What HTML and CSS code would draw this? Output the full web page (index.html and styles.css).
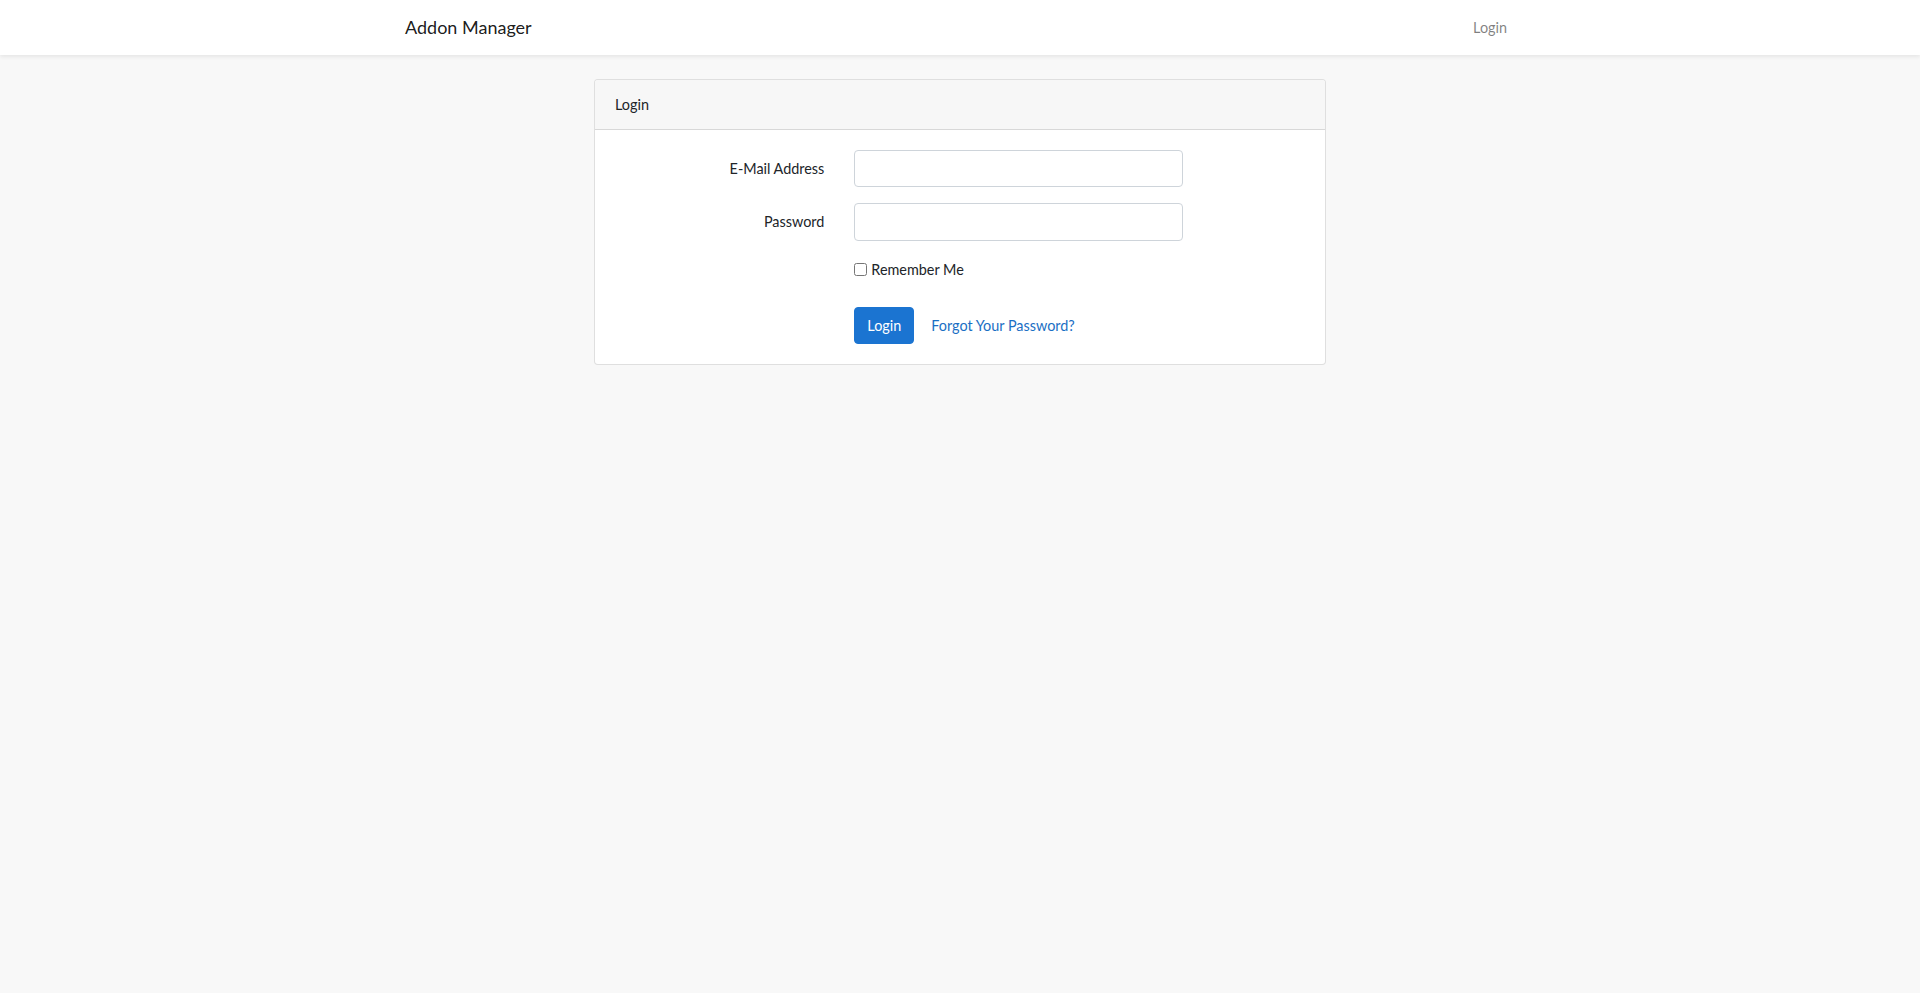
FILE: index.html
```html
<!DOCTYPE html>
<html lang="en">
<head>
    <meta charset="UTF-8">
    <meta name="viewport" content="width=device-width, initial-scale=1.0">
    <title>Addon Manager</title>
    <link rel="stylesheet" href="styles.css">
</head>
<body>

    <nav class="navbar">
        <div class="container navbar-inner">
            <a class="navbar-brand" href="#">Addon Manager</a>
            <a class="nav-link" href="#">Login</a>
        </div>
    </nav>

    <main class="main">
        <div class="container">
            <div class="card">
                <div class="card-header">Login</div>
                <div class="card-body">
                    <form>
                        <div class="form-row">
                            <label class="form-label" for="email">E-Mail Address</label>
                            <div class="form-field">
                                <input id="email" type="email" class="form-control">
                            </div>
                        </div>

                        <div class="form-row">
                            <label class="form-label" for="password">Password</label>
                            <div class="form-field">
                                <input id="password" type="password" class="form-control">
                            </div>
                        </div>

                        <div class="form-row form-row-check">
                            <div class="form-label"></div>
                            <div class="form-field">
                                <input class="check-input" type="checkbox" id="remember">
                                <label class="check-label" for="remember">Remember Me</label>
                            </div>
                        </div>

                        <div class="form-row form-row-last">
                            <div class="form-label"></div>
                            <div class="form-field form-actions">
                                <button type="button" class="btn btn-primary">Login</button>
                                <a class="btn btn-link" href="#">Forgot Your Password?</a>
                            </div>
                        </div>
                    </form>
                </div>
            </div>
        </div>
    </main>

</body>
</html>
```

FILE: styles.css
```css
body {
    margin: 0;
    background-color: #f8f8f8;
    color: #212529;
    font-family: Lato, "Liberation Sans", sans-serif;
    font-size: 14.4px;
    line-height: 1.6;
}
a {
    text-decoration: none;
}
.container {
    width: 1140px;
    margin: 0 auto;
    padding: 0 15px;
    box-sizing: border-box;
}
.navbar {
    background-color: white;
    box-shadow: 0 2px 4px rgba(0, 0, 0, 0.075);
    padding: 8px 0;
}
.navbar-inner {
    display: flex;
    justify-content: space-between;
    align-items: center;
}
.navbar-brand {
    color: rgba(0, 0, 0, 0.9);
    font-size: 18px;
    padding: 5.12px 0;
    line-height: 28.8px;
}
.nav-link {
    color: rgba(0, 0, 0, 0.5);
    padding: 8px;
}
.main {
    padding: 24px 0;
}
.card {
    width: 730px;
    margin: 0 auto;
    background: white;
    border: 1px solid rgba(0, 0, 0, 0.125);
    border-radius: 4px;
}
.card-header {
    padding: 12.75px 20px;
    background-color: #f7f7f7;
    border-bottom: 1px solid rgba(0, 0, 0, 0.125);
    border-radius: 3px 3px 0 0;
}
.card-body {
    padding: 20px;
}
.form-row {
    display: grid;
    grid-template-columns: 239.33px 359px;
    margin: 0 -15px 16px;
}
.form-row-check {
    margin-bottom: 26px;
}
.form-row-last {
    margin-bottom: 0;
}
.form-label {
    padding: 7px 15px;
    text-align: right;
}
.form-field {
    padding: 0 15px;
}
.form-control {
    display: block;
    box-sizing: border-box;
    width: 100%;
    height: 37.5px;
    padding: 6px 12px;
    font: inherit;
    color: #495057;
    background: white;
    border: 1px solid #ced4da;
    border-radius: 4px;
}
.form-row-check .form-label {
    padding: 0;
}
.form-row-check .form-field {
    display: flex;
    align-items: center;
    padding-top: 1px;
}
.check-input {
    width: 13px;
    height: 13px;
    margin: 0 4px 0 0;
}
.form-actions {
    display: flex;
    align-items: center;
    gap: 4px;
    grid-column: 2 / span 2;
}
.btn {
    display: inline-block;
    padding: 6px 12px;
    font: inherit;
    line-height: 1.6;
    border: 1px solid transparent;
    border-radius: 4px;
}
.btn-primary {
    color: white;
    background-color: #1b74d1;
    border-color: #1b74d1;
}
.btn-link {
    color: #1b6fc4;
}
```
